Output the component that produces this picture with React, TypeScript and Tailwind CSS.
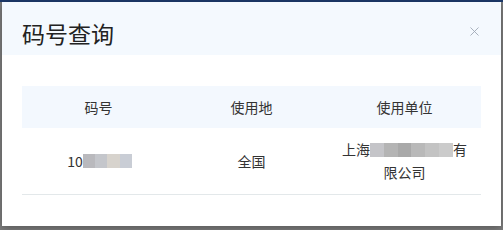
import React from 'react';
import { X } from 'lucide-react';

const font = { fontFamily: '"Microsoft YaHei", "Noto Sans CJK SC", "Noto Sans", sans-serif' };

// 打码区域（原图为马赛克）
const Blur = ({ colors, w }: { colors: string[]; w: number }) => (
  <span className="inline-flex h-[14px] align-middle" style={{ width: w }}>
    {colors.map((c, i) => (
      <span key={i} className="h-full flex-1" style={{ background: c }} />
    ))}
  </span>
);

export default function App() {
  const columns = ['码号', '使用地', '使用单位'];

  return (
    <div className="w-[503px] h-[230px] bg-[#7d7d7d] relative overflow-hidden" style={font}>
      <div className="h-[2px] bg-[#1d3a6b]" />
      <div className="absolute left-[2px] top-[2px] w-[499px] h-[224px] bg-white shadow-[0_2px_8px_rgba(0,0,0,0.3)] flex flex-col">
        <div className="h-[53px] bg-[#f4f9fe] flex items-center justify-between pl-[20px] pr-[19px] pt-[10px]">
          <h2 className="text-[23px] leading-none text-[#222]">码号查询</h2>
          <X size={15} strokeWidth={1.4} className="text-[#9ea7b5] -mt-[4px]" />
        </div>

        <div className="mx-[20px] mt-[31px]">
          <div className="grid grid-cols-3 h-[42px] bg-[#f3f8fe] items-center text-center text-[14px] text-[#333]">
            {columns.map((c) => (
              <div key={c}>{c}</div>
            ))}
          </div>
          <div className="grid grid-cols-3 h-[67px] items-center text-center text-[14px] text-[#333] border-b border-[#e3e8ea]">
            <div className="flex justify-center items-center">
              <span className="pl-[2px]">10</span>
              <Blur w={49} colors={['#b9b9bd', '#c4c6cb', '#d7d3cd', '#c9cdd5']} />
            </div>
            <div>全国</div>
            <div className="leading-[23px] px-[10px]">
              <div className="flex justify-center items-center">
                <span>上海</span>
                <Blur w={83} colors={['#c4c4c8', '#b4b4b4', '#a9a9a9', '#b9b9b9', '#c3c3c3', '#cbcbcb']} />
                <span>有</span>
              </div>
              <div>限公司</div>
            </div>
          </div>
        </div>
      </div>
    </div>
  );
}
